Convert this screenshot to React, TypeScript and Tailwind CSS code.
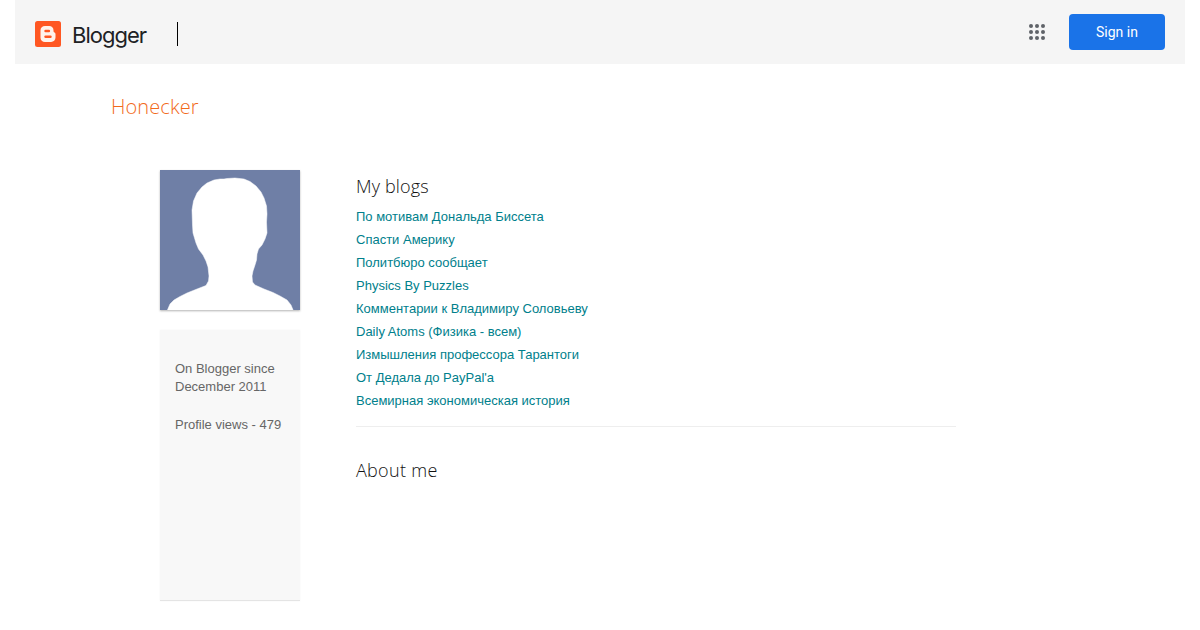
const blogs = [
  "По мотивам Дональда Биссета",
  "Спасти Америку",
  "Политбюро сообщает",
  "Physics By Puzzles",
  "Комментарии к Владимиру Соловьеву",
  "Daily Atoms (Физика - всем)",
  "Измышления профессора Тарантоги",
  "От Дедала до PayPal'а",
  "Всемирная экономическая история",
]

function BloggerLogo() {
  return (
    <svg width="26" height="26" viewBox="0 0 26 26">
      <rect width="26" height="26" rx="2.5" fill="#ff5722" />
      <path
        d="M10 5h4.200c2.600 0 4.300 1.800 4.300 4.200v.9c0 .8.500 1.200 1 1.500.6.300 1 .8 1 1.600v3.400c0 2.700-2 4.400-4.300 4.400H10c-2.600 0-4.500-1.800-4.500-4.300V9.300C5.500 6.800 7.400 5 10 5z"
        fill="#fff3ec"
      />
      <rect x="9.300" y="8.800" width="5.800" height="2.400" rx="1.200" fill="#ff5722" />
      <rect x="9.300" y="14.600" width="7.400" height="2.400" rx="1.200" fill="#ff5722" />
    </svg>
  )
}

function AppsIcon() {
  return (
    <svg width="16" height="16" viewBox="0 0 16 16" fill="#5f6368">
      {[2, 8, 14].map((y) =>
        [2, 8, 14].map((x) => <circle key={`${x}-${y}`} cx={x} cy={y} r="2" />)
      )}
    </svg>
  )
}

function Avatar() {
  return (
    <div className="h-[140px] w-[140px] overflow-hidden bg-[#6f7fa6] shadow-[0_1px_2px_rgba(0,0,0,0.3)]">
      <svg width="140" height="140" viewBox="0 0 140 140" className="blur-[0.5px]">
        <path
          d="M67 8.500L75 8L84 9L90 11.500L96 16L101 22L104 28L106.500 36L107 44L106.500 52L107 63L105 69L102 75L98.500 79L97 84L96.500 90L95 95L93 101L92 106L92.500 112L95 115L104 119L113 122.500L120 126L127 130L131 135L133.500 141L7 141L10 134L14 130L20 126.500L27 123L37 119L46 115.500L48.500 111L49 106L48 97L46 91L43 85L38.500 79L36 73L33 63L32.500 55L32 40L33.500 31L37 23L42 17L47 13L54 10L60 9L64 9Z"
          fill="#fff"
          stroke="#fff"
          strokeWidth="0.5"
          strokeLinejoin="round"
        />
      </svg>
    </div>
  )
}

export default function App() {
  return (
    <div className="h-[630px] overflow-hidden bg-white px-[15px] font-['Liberation_Sans',sans-serif] antialiased">
      <header className="flex h-16 items-center justify-between bg-[#f5f5f5] px-5">
        <div className="flex items-center pt-1">
          <BloggerLogo />
          <span className="mt-0.5 ml-[11px] font-['Inter',sans-serif] text-[22px] leading-none tracking-[-1px] text-[#202124]">
            Blogger
          </span>
          <div className="ml-[31px] h-6 w-px bg-black" />
        </div>
        <div className="flex items-center">
          <AppsIcon />
          <button className="ml-6 h-9 w-24 rounded bg-[#1a73e8] font-['Roboto',sans-serif] text-sm text-white">
            Sign in
          </button>
        </div>
      </header>

      <h1 className="mt-[29px] pl-[96px] font-['Open_Sans',sans-serif] text-xl leading-[28px] font-light tracking-[0.1px] text-[#f26a1b]">
        Honecker
      </h1>

      <div className="mt-[49px] flex pl-[145px]">
        <aside className="w-[140px]">
          <Avatar />
          <div className="mt-5 h-[271px] border-b border-[#e4e4e4] bg-[#f8f8f8] px-[15px] pt-[30px] text-[13px] leading-[18px] text-[#666666] shadow-[0_0_2px_rgba(0,0,0,0.04)]">
            <p>On Blogger since December 2011</p>
            <p className="mt-5">Profile views - 479</p>
          </div>
        </aside>

        <main className="ml-14 w-[600px]">
          <h2 className="font-['Open_Sans',sans-serif] text-lg leading-[32px] font-light tracking-[0.15px] text-[#111111]">
            My blogs
          </h2>
          <ul className="mt-[3px] border-b border-[#eeeeee] pb-[14px]">
            {blogs.map((title) => (
              <li key={title} className="text-[13px] leading-[23px] text-[#00808c]">
                {title}
              </li>
            ))}
          </ul>
          <h2 className="mt-[27px] font-['Open_Sans',sans-serif] text-lg leading-[32px] font-light tracking-[0.3px] text-[#111111]">
            About me
          </h2>
        </main>
      </div>
    </div>
  )
}
